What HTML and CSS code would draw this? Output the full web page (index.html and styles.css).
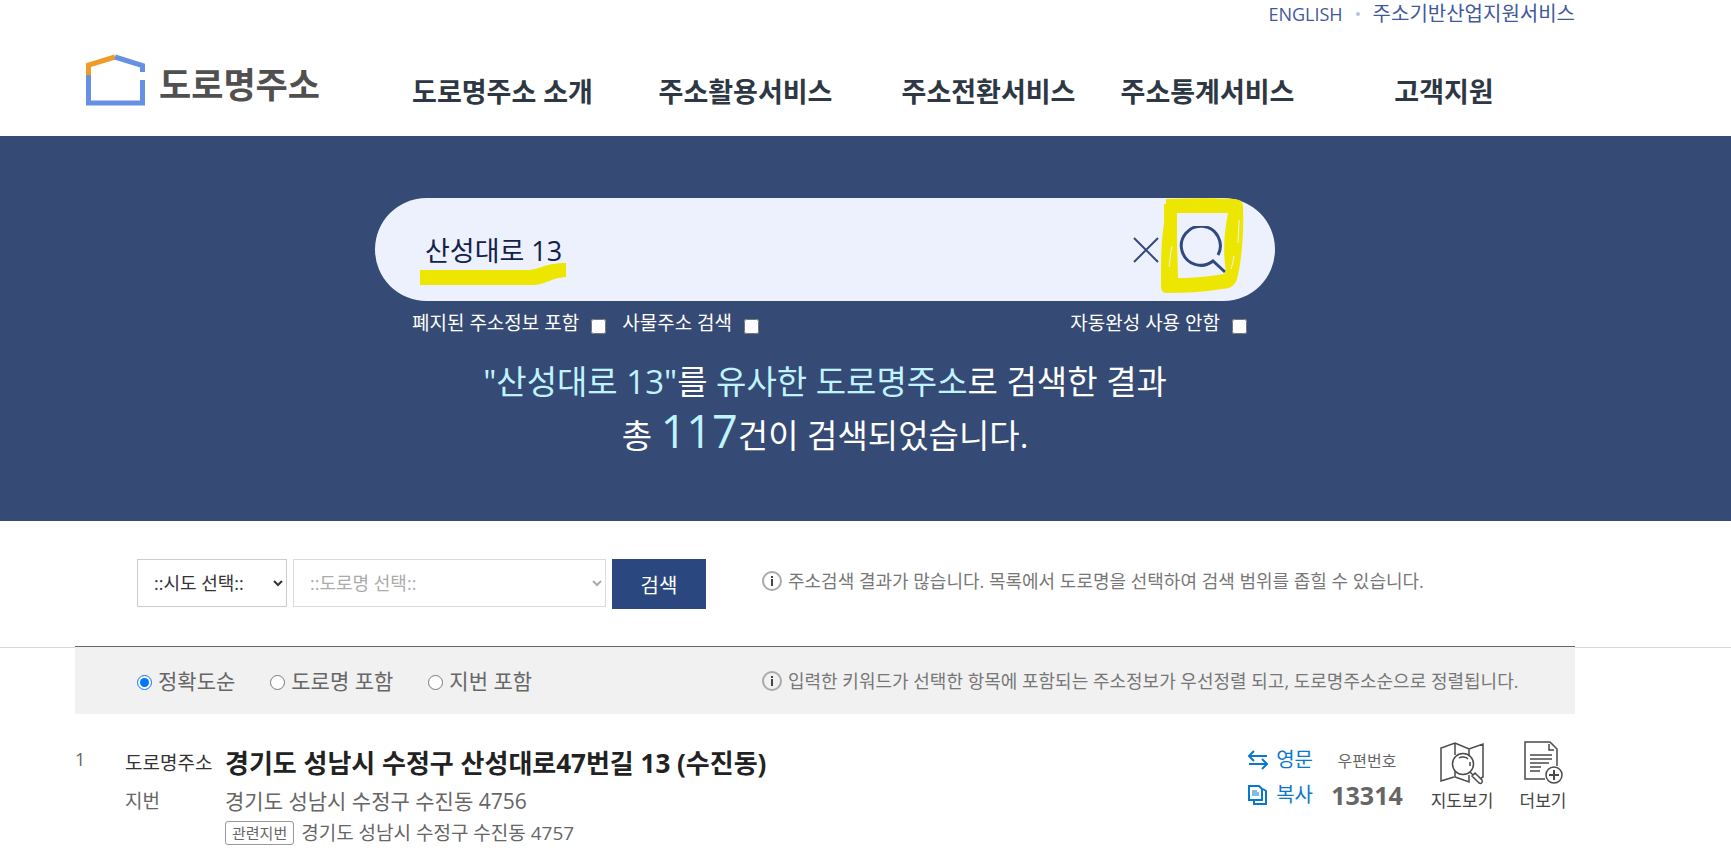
FILE: index.html
```html
<!DOCTYPE html>
<html lang="ko">
  <head>
    <meta charset="UTF-8" />
    <title>도로명주소 검색</title>
    <link rel="stylesheet" href="styles.css">
  </head>
  <body>
    <header class="header wrap">
      <div class="util">
        <a href="#" class="english">ENGLISH</a>
        <span class="dot"></span>
        <a href="#">주소기반산업지원서비스</a>
      </div>
      <div class="gnb">
        <a class="logo" href="#">
          <svg width="60" height="52" viewBox="0 0 60 52" fill="none" stroke-width="5">
            <path d="M2.5 22V11L29 3" stroke="#f29a27" />
            <path d="M29 3L56.500 11.500V18M56.500 26V49H2.500V21" stroke="#6690e4" />
          </svg>
          <span>도로명주소</span>
        </a>
        <nav class="menu">
          <a href="#">도로명주소 소개</a>
          <a href="#">주소활용서비스</a>
          <a href="#">주소전환서비스</a>
          <a href="#">주소통계서비스</a>
          <a href="#">고객지원</a>
        </nav>
      </div>
    </header>

    <section class="hero">
      <div class="wrap">
        <form class="search">
          <div class="search-box">
            <input type="text" class="keyword" value="산성대로 13" aria-label="주소 검색" />
            <button type="button" class="clear" aria-label="지우기">
              <svg width="26" height="26" viewBox="0 0 26 26" fill="none" stroke="#354a75" stroke-width="2">
                <path d="M1 1L25 25M25 1L1 25" />
              </svg>
            </button>
            <button type="button" class="find" aria-label="검색">
              <svg width="48" height="48" viewBox="0 0 48 48" fill="none" stroke="#304a80" stroke-width="3">
                <path d="M39 29A19.500 19.500 0 1 0 34 35L46 46" />
              </svg>
            </button>
            <svg class="mark mark-keyword" width="146" height="24" viewBox="0 0 146 24">
              <path d="M0 8H106C120 8 124 1 146 1V15C130 16 126 23 112 23H0Z" fill="#ede600" />
            </svg>
            <svg class="mark mark-find" width="84" height="96" viewBox="0 0 84 96">
              <path fill-rule="evenodd" fill="#ede600" d="M5 1C28 0 52 0 74 1C80 2 82 4 82 9C83 32 81 62 76 81C74 88 68 91 61 91C42 94 24 95 6 95C1 95 0 92 0 87C0 64 0 45 3 25V6H5ZM16 15V42L17 80C36 80 50 78 63 76C66 73 64 70 64 66C62 48 64 30 67 15Z" />
              <path d="M11 48C9 56 9 64 8 69M78 22L77 45M73 58C72 64 71 68 70 71" fill="none" stroke="#edf1fd" stroke-width="1" />
            </svg>
          </div>
          <div class="options">
            <label>폐지된 주소정보 포함 <input type="checkbox" /></label>
            <label>사물주소 검색 <input type="checkbox" /></label>
            <label class="auto">자동완성 사용 안함 <input type="checkbox" /></label>
          </div>
        </form>
        <p class="summary">
          <em>"산성대로 13"</em>를 <em>유사한 도로명주소</em>로 검색한 결과<br />
          총 <em class="count">117</em>건이 검색되었습니다.
        </p>
      </div>
    </section>

    <section class="filter">
      <div class="wrap row">
        <form class="selects">
          <select class="sido" aria-label="시도 선택">
            <option>::시도 선택::</option>
          </select>
          <select class="road" aria-label="도로명 선택" disabled>
            <option>::도로명 선택::</option>
          </select>
          <button type="button" class="btn">검색</button>
        </form>
        <p class="info">
          <svg width="20" height="20" viewBox="0 0 20 20" fill="none">
            <circle cx="10" cy="10" r="9" stroke="#aaa" stroke-width="2" />
            <path d="M10 8V15M10 5V7" stroke="#444" stroke-width="2" />
          </svg>
          주소검색 결과가 많습니다. 목록에서 도로명을 선택하여 검색 범위를 좁힐 수 있습니다.
        </p>
      </div>
    </section>

    <main class="wrap">
      <div class="sort row">
        <div class="radios">
          <label><input type="radio" name="sort" checked />정확도순</label>
          <label><input type="radio" name="sort" />도로명 포함</label>
          <label><input type="radio" name="sort" />지번 포함</label>
        </div>
        <p class="info">
          <svg width="20" height="20" viewBox="0 0 20 20" fill="none">
            <circle cx="10" cy="10" r="9" stroke="#aaa" stroke-width="2" />
            <path d="M10 8V15M10 5V7" stroke="#444" stroke-width="2" />
          </svg>
          입력한 키워드가 선택한 항목에 포함되는 주소정보가 우선정렬 되고, 도로명주소순으로 정렬됩니다.
        </p>
      </div>

      <article class="result">
        <span class="num">1</span>
        <dl class="address">
          <dt class="first">도로명주소</dt>
          <dd class="title">경기도 성남시 수정구 산성대로47번길 13 (수진동)</dd>
          <dt>지번</dt>
          <dd class="jibun">경기도 성남시 수정구 수진동 4756</dd>
          <dd class="related"><span class="tag">관련지번</span>경기도 성남시 수정구 수진동 4757</dd>
        </dl>
        <div class="tools">
          <button type="button">
            <svg width="20" height="20" viewBox="0 0 20 20" fill="none" stroke="#0a78cc" stroke-width="2">
              <path d="M19 6H2M6 1L1 6L6 11M1 14H18M14 9L19 14L14 19" />
            </svg>
            영문
          </button>
          <button type="button">
            <svg width="20" height="20" viewBox="0 0 20 20" fill="none" stroke="#0a78cc" stroke-width="2">
              <path d="M1 1H11L14 4V15H1ZM15 4L18 6V19H6V16" />
              <path d="M4 6H9M4 8H11M4 10H11" stroke-width="1" />
            </svg>
            복사
          </button>
        </div>
        <div class="zip">
          <span>우편번호</span>
          <strong>13314</strong>
        </div>
        <button type="button" class="view map">
          <svg width="44" height="44" viewBox="0 0 44 44" fill="none" stroke="#4a4a4a" stroke-width="1.500">
            <path d="M14 36L1 40V7L15 2L29 8L43 3V36L41 37M15 2V14M15 30V36L29 41V34M29 8V14" />
            <circle cx="23" cy="23" r="10.500" />
            <path d="M19 17C22 15 26 16 28 18M30 21V25" />
            <path d="M30 31L33 34M32 35L35 32L42 39C43 42 41 43 39 42Z" />
          </svg>
          지도보기
        </button>
        <button type="button" class="view more">
          <svg width="44" height="44" viewBox="0 0 44 44" fill="none" stroke="#4a4a4a" stroke-width="1.500">
            <path d="M24 38H4V1H29L36 8V25" />
            <path d="M28 3V9H33M9 14H31M9 18H31M9 22H28M9 26H20M9 30H19" />
            <circle cx="33" cy="34" r="8" />
            <path d="M33 29V39M28 34H38" stroke-width="2" />
          </svg>
          더보기
        </button>
      </article>
    </main>
  </body>
</html>
```
FILE: styles.css
```css
* {
  box-sizing: border-box;
}

body {
  margin: 0;
  background: #fff;
  color: #666;
  font-family: "Open Sans", "Noto Sans CJK KR", sans-serif;
  font-size: 20px;
  line-height: 24px;
}

a {
  color: inherit;
  text-decoration: none;
}

button,
input,
select {
  font-family: inherit;
}

button {
  padding: 0;
  border: 0;
  background: none;
  cursor: pointer;
}

p,
dl,
dd {
  margin: 0;
}

svg {
  flex: none;
}

.wrap {
  margin: 0 156px 0 75px;
}

/* header */
.header {
  height: 136px;
}

.util {
  display: flex;
  justify-content: flex-end;
  align-items: center;
  gap: 13px;
  height: 28px;
  color: #41599b;
}

.english {
  font-size: 18px;
}

.dot {
  width: 4px;
  height: 4px;
  border-radius: 2px;
  background: #b5c1e6;
}

.gnb {
  display: flex;
  align-items: center;
  height: 108px;
}

.logo {
  display: flex;
  flex: none;
  align-items: center;
  gap: 13px;
  width: 306px;
  padding: 0 0 4px 11px;
  color: #505050;
  font-size: 35px;
  font-weight: bold;
}

.logo span {
  padding-top: 10px;
}

.menu {
  display: grid;
  flex: 1;
  grid-template-columns: 243fr 243fr 243fr 195fr 270fr;
  padding-top: 20px;
  color: #2d3844;
  font-size: 27px;
  font-weight: bold;
  text-align: center;
  white-space: nowrap;
}

.menu a:last-child {
  padding-left: 8px;
}

/* search */
.hero {
  padding: 62px 0 58px;
  background: #354a75;
  color: #fff;
}

.search {
  max-width: 900px;
  margin: 0 auto;
}

.search-box {
  position: relative;
  display: flex;
  align-items: center;
  height: 103px;
  padding: 0 48px 0 50px;
  border-radius: 52px;
  background: #edf1fd;
}

.keyword {
  flex: 1;
  min-width: 0;
  height: 48px;
  padding: 0;
  border: 0;
  outline: 0;
  background: none;
  color: #14224a;
  font-size: 27px;
}

.clear,
.find {
  display: flex;
}

.clear {
  margin-right: 20px;
}

/* highlighter strokes */
.mark {
  position: absolute;
  pointer-events: none;
}

.mark-keyword {
  top: 64px;
  left: 45px;
}

.mark-find {
  top: 0;
  right: 30px;
}

.options {
  display: flex;
  gap: 16px;
  padding: 10px 28px 0 37px;
  font-size: 19px;
}

.options label {
  display: flex;
  align-items: center;
  gap: 12px;
}

.options input {
  width: 15px;
  height: 15px;
  margin: 6px 0 0;
}

.options .auto {
  margin-left: auto;
}

.summary {
  padding-top: 20px;
  font-size: 33px;
  line-height: 54px;
  text-align: center;
}

.summary em {
  color: #bff3ff;
  font-style: normal;
}

.summary .count {
  font-size: 45px;
  line-height: 32px;
}

/* filter */
.row {
  display: grid;
  grid-template-columns: 625px 1fr;
  padding-left: 62px;
}

.filter {
  height: 127px;
  padding-top: 38px;
  border-bottom: 1px solid #d8d8d8;
}

.selects {
  display: flex;
  gap: 6px;
}

.selects select {
  height: 48px;
  padding: 0 0 0 12px;
  border: 1px solid #ccc;
  border-radius: 0;
  background: #fff;
  color: #333;
  font-size: 18px;
}

.selects .sido {
  width: 150px;
}

.selects .road {
  width: 313px;
  color: #888;
}

.btn {
  width: 94px;
  height: 50px;
  background: #2a487f;
  color: #fff;
  font-size: 20px;
}

.info {
  display: flex;
  align-items: center;
  gap: 6px;
  color: #777;
  font-size: 18px;
  white-space: nowrap;
}

.filter .info {
  height: 44px;
}

/* sort */
.sort {
  position: relative;
  align-items: center;
  height: 68px;
  margin-top: -2px;
  border-top: 1px solid #666;
  background: #f1f1f1;
}

.radios {
  display: flex;
  gap: 35px;
  font-size: 21px;
}

.radios label {
  display: flex;
  align-items: center;
  gap: 6px;
}

.radios input {
  width: 15px;
  height: 15px;
  margin: 4px 0 0;
}

/* result */
.result {
  display: flex;
  padding-top: 27px;
}

.num {
  width: 50px;
  padding-top: 6px;
  font-size: 18px;
}

.address {
  display: grid;
  flex: 1;
  grid-template-columns: 100px 1fr;
  grid-template-rows: 44px 32px 32px;
  align-content: start;
  align-items: center;
}

.address dt {
  font-size: 19px;
}

.address .first {
  color: #333;
}

.title {
  color: #222;
  font-size: 26px;
  font-weight: bold;
}

.jibun {
  font-size: 21px;
}

.related {
  grid-column: 2;
  display: flex;
  align-items: center;
  gap: 7px;
  font-size: 19px;
}

.tag {
  padding: 0 6px;
  border: 1px solid #999;
  border-radius: 3px;
  font-size: 15px;
  line-height: 22px;
}

.tools {
  display: flex;
  flex-direction: column;
  gap: 11px;
  padding-top: 7px;
}

.tools button {
  display: flex;
  align-items: center;
  gap: 8px;
  color: #0a78cc;
  font-size: 20px;
  line-height: 24px;
}

.zip {
  display: flex;
  flex-direction: column;
  align-items: center;
  gap: 10px;
  width: 108px;
  padding-top: 8px;
  font-size: 16px;
}

.zip strong {
  font-size: 25px;
}

.view {
  display: flex;
  flex-direction: column;
  align-items: center;
  gap: 4px;
  color: #444;
  font-size: 17px;
  line-height: 24px;
}

.map {
  width: 82px;
}

.more {
  width: 64px;
  margin-left: 8px;
}
```
